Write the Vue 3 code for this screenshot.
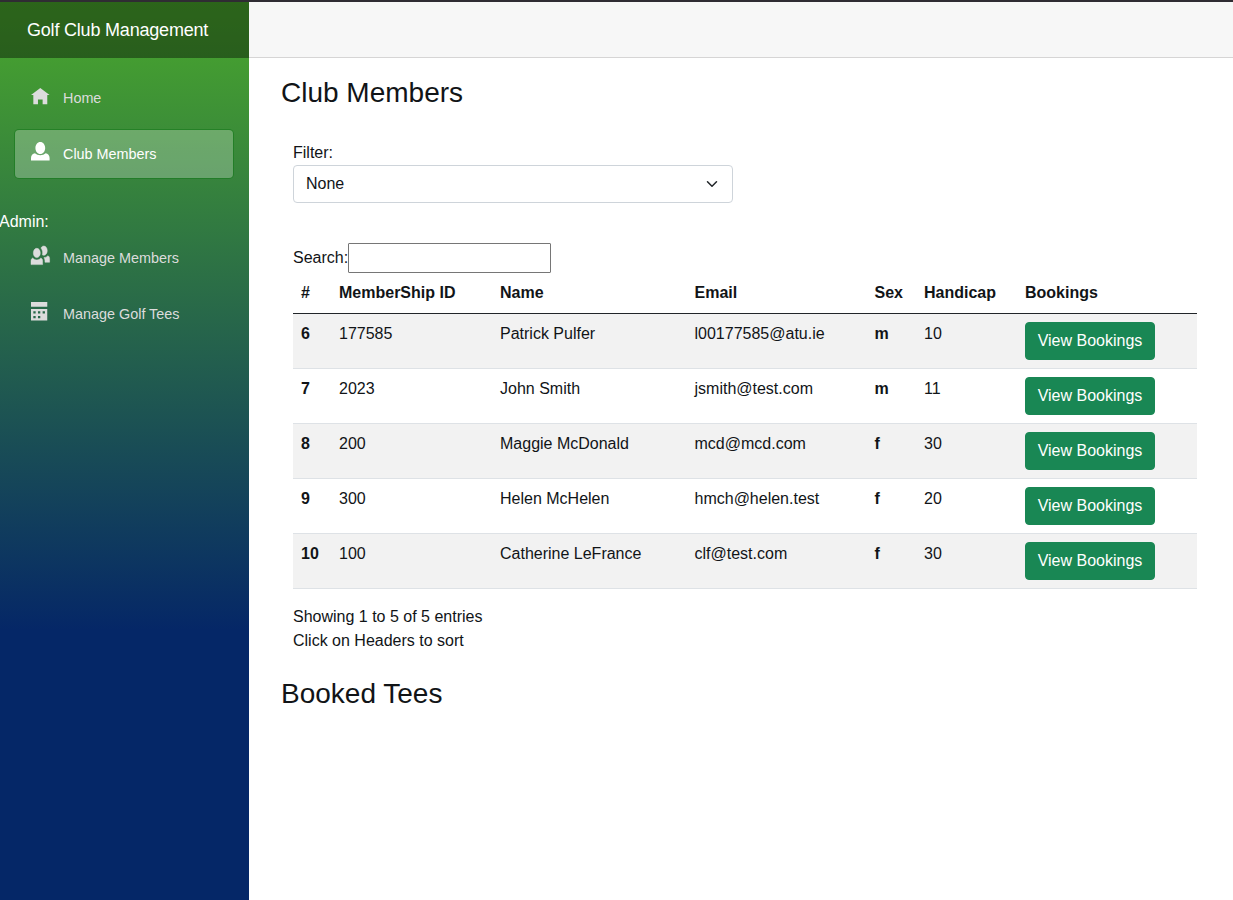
<script setup>
const icons = {
  home: 'M4 0l-4 3h1v4h2v-2h2v2h2v-4.03l1 .03-4-3z',
  person: 'M4 0c-1.2 0-2.1 1.15-2.1 2.6s.9 2.6 2.1 2.6 2.1-1.15 2.1-2.6-.9-2.6-2.1-2.6zm-2.3 4.8c-1 .15-1.7 1-1.7 2.1v1.1h8v-1.1c0-1.1-.7-1.95-1.7-2.1-.6.55-1.4.85-2.3.85s-1.7-.3-2.3-.85z',
  people: 'M5.5 0c-.51 0-.95.35-1.22.88.45.54.72 1.28.72 2.13 0 .29-.03.55-.09.81.19.11.38.19.59.19.83 0 1.5-.9 1.5-2s-.67-2-1.5-2zm-3 1c-.83 0-1.5.9-1.5 2s.67 2 1.5 2 1.5-.9 1.5-2-.67-2-1.5-2zm4.75 3.16c-.43.51-1.02.82-1.69.84.27.38.44.84.44 1.34v.66h2v-1.66c0-.52-.31-.97-.75-1.19zm-6.5 1c-.44.22-.75.67-.75 1.19v1.66h5v-1.66c0-.52-.31-.97-.75-1.19-.45.53-1.06.84-1.75.84s-1.3-.32-1.75-.84z',
  calendar: 'M0 0v2h7v-2h-7zm0 3v4.91c0 .05.04.09.09.09h6.81c.05 0 .09-.04.09-.09v-4.91h-7zm1 1h1v1h-1v-1zm2 0h1v1h-1v-1zm2 0h1v1h-1v-1zm-4 2h1v1h-1v-1zm2 0h1v1h-1v-1z'
}
const mainNav = [
  { label: 'Home', icon: 'home' },
  { label: 'Club Members', icon: 'person', active: true }
]
const adminNav = [
  { label: 'Manage Members', icon: 'people' },
  { label: 'Manage Golf Tees', icon: 'calendar' }
]
const headers = ['#', 'MemberShip ID', 'Name', 'Email', 'Sex', 'Handicap', 'Bookings']
const members = [
  { id: 6, membership: '177585', name: 'Patrick Pulfer', email: 'l00177585@atu.ie', sex: 'm', handicap: 10 },
  { id: 7, membership: '2023', name: 'John Smith', email: 'jsmith@test.com', sex: 'm', handicap: 11 },
  { id: 8, membership: '200', name: 'Maggie McDonald', email: 'mcd@mcd.com', sex: 'f', handicap: 30 },
  { id: 9, membership: '300', name: 'Helen McHelen', email: 'hmch@helen.test', sex: 'f', handicap: 20 },
  { id: 10, membership: '100', name: 'Catherine LeFrance', email: 'clf@test.com', sex: 'f', handicap: 30 }
]
</script>

<template>
  <div class="page">
    <aside class="sidebar">
      <div class="brand">Golf Club Management</div>
      <nav>
        <a v-for="n in mainNav" :key="n.label" class="link" :class="[n.icon, { active: n.active }]">
          <svg viewBox="0 0 8 8"><path :d="icons[n.icon]" fill="currentColor" /></svg>
          <span>{{ n.label }}</span>
        </a>
      </nav>
      <div class="admin">Admin:</div>
      <nav class="admin-nav">
        <a v-for="n in adminNav" :key="n.label" class="link" :class="n.icon">
          <svg viewBox="0 0 8 8"><path :d="icons[n.icon]" fill="currentColor" /></svg>
          <span>{{ n.label }}</span>
        </a>
      </nav>
    </aside>
    <main>
      <div class="topbar"></div>
      <article>
        <h3 class="title">Club Members</h3>
        <section class="panel">
          <label class="filter-label">Filter:</label>
          <div class="select">
            <span>None</span>
            <svg viewBox="0 0 16 16"><path d="m2 5 6 6 6-6" fill="none" stroke="#212529" stroke-width="2" stroke-linecap="round" stroke-linejoin="round" /></svg>
          </div>
          <div class="search"><label>Search:</label><input type="text" /></div>
          <table>
            <colgroup>
              <col class="c1" /><col class="c2" /><col class="c3" /><col class="c4" /><col class="c5" /><col class="c6" /><col />
            </colgroup>
            <thead>
              <tr><th v-for="h in headers" :key="h">{{ h }}</th></tr>
            </thead>
            <tbody>
              <tr v-for="m in members" :key="m.id">
                <th>{{ m.id }}</th>
                <td>{{ m.membership }}</td>
                <td>{{ m.name }}</td>
                <td>{{ m.email }}</td>
                <th>{{ m.sex }}</th>
                <td>{{ m.handicap }}</td>
                <td><button>View Bookings</button></td>
              </tr>
            </tbody>
          </table>
          <div>Showing 1 to 5 of 5 entries</div>
          <div>Click on Headers to sort</div>
        </section>
        <h3 class="booked">Booked Tees</h3>
      </article>
    </main>
  </div>
</template>

<style>
body { margin: 0; background: #fff; }
</style>

<style scoped>
* { box-sizing: border-box; }
.page {
  display: flex;
  height: 900px;
  overflow: hidden;
  border-top: 2px solid #2f2c33;
  font: 16px/24px "Liberation Sans", Arial, sans-serif;
  color: #111417;
}
.sidebar {
  width: 249px;
  flex: none;
  background: linear-gradient(180deg, #4aa82c 0%, #052767 70%);
}
.brand {
  height: 56px;
  padding: 0 0 0 27px;
  background: rgba(0, 0, 0, 0.4);
  color: #fff;
  font-size: 18px;
  letter-spacing: -0.2px;
  line-height: 56px;
  white-space: nowrap;
}
nav { display: flex; flex-direction: column; gap: 8px; padding: 16px 16px 0 15px; }
.link {
  display: flex;
  align-items: center;
  height: 48px;
  padding-left: 16px;
  border-radius: 4px;
  color: #dcdcdc;
  font-size: 14.4px;
  line-height: 48px;
}
.link svg { width: 18.6px; height: 18.6px; margin: -5px 13.4px 0 0; flex: none; overflow: visible; }
.link.home svg { margin-top: -1px; }
.link.people path { stroke: currentColor; stroke-width: 0.2; }
.link.active {
  background: rgba(255, 255, 255, 0.25);
  box-shadow: 0 0 0 1px rgba(22, 120, 28, 0.6);
  color: #fff;
}
.admin { margin: 32px 0 0 -1px; color: #fff; }
.admin-nav { padding-top: 0; }
main { flex: 1; min-width: 0; }
.topbar { height: 56px; background: #f7f7f7; border-bottom: 1px solid #d6d5d5; }
article { padding: 18px 24px 0 32px; }
h3 { margin: 0; font-weight: 400; font-size: 28px; line-height: 34px; }
.panel { padding: 31px 12px 0; }
.filter-label { display: block; height: 24px; }
.select {
  display: flex;
  align-items: center;
  justify-content: space-between;
  width: 440px;
  height: 38px;
  padding: 0 12px;
  border: 1px solid #ced4da;
  border-radius: 4px;
}
.select svg { width: 16px; height: 12px; }
.search { display: flex; align-items: center; height: 30px; margin-top: 40px; }
.search input { width: 203px; height: 30px; border: 1px solid #767676; border-radius: 1px; background: #fff; }
table { width: 904px; table-layout: fixed; border-collapse: collapse; margin-bottom: 16px; }
th, td { padding: 8px; text-align: left; vertical-align: top; }
thead th { height: 40px; padding-bottom: 7px; border-bottom: 1px solid #212529; white-space: nowrap; }
tbody th, tbody td { height: 55px; border-bottom: 1px solid #dee2e6; }
tbody tr:nth-child(odd) { background: #f2f2f2; }
.c1 { width: 38px; }
.c2 { width: 161px; }
.c3 { width: 194.5px; }
.c4 { width: 180px; }
.c5 { width: 49.5px; }
.c6 { width: 101px; }
button {
  display: block;
  width: 130px;
  height: 38px;
  padding: 0;
  border: 1px solid #198754;
  border-radius: 4px;
  background: #198754;
  color: #fff;
  font: inherit;
}
.booked { margin-top: 24px; }
</style>
